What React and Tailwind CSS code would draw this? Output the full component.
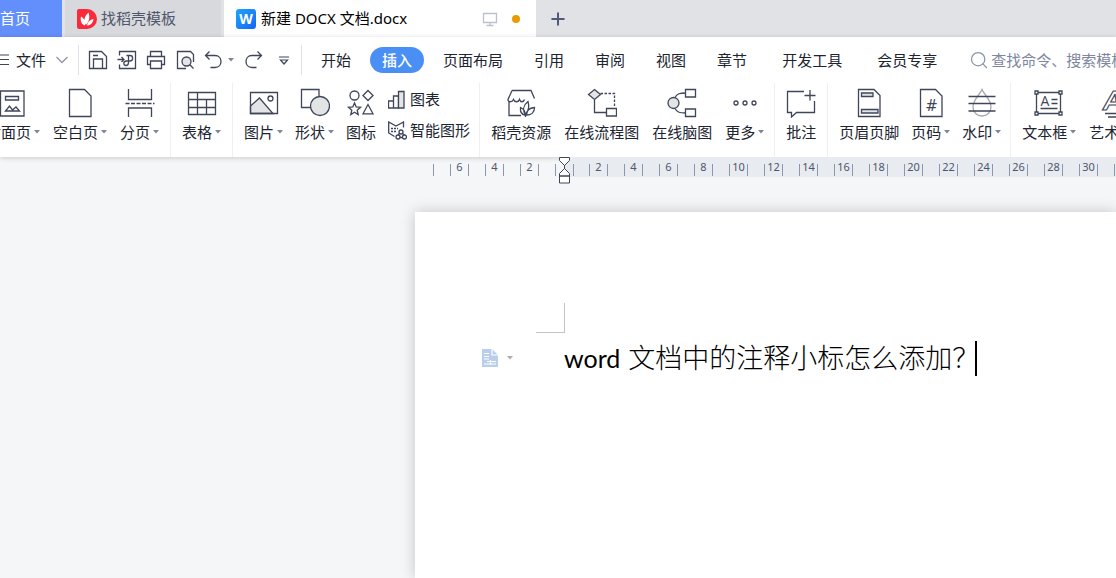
import { Plus, Search } from "lucide-react";

const ink = "#3f4659";

const Icon = ({ size = 30, children }) => (
  <svg
    width={size}
    height={size}
    viewBox={`0 0 ${size} ${size}`}
    fill="none"
    stroke={ink}
    strokeWidth="1.3"
    className="shrink-0"
    aria-hidden="true"
  >
    {children}
  </svg>
);

const Caret = () => (
  <svg width="6" height="4" viewBox="0 0 6 4" fill="#7c869c" className="shrink-0" aria-hidden="true">
    <path d="M0 0h6L3 3.5z" />
  </svg>
);

const icons = {
  cover: (
    <Icon>
      <path d="M2.5 3h23.5v25H2.5zM7.5 8.500h13v3.500h-13z" />
      <path d="M7.500 23l4-5 3 4 3.500-3 3.500 4z" />
    </Icon>
  ),
  blank: (
    <Icon>
      <path d="M4.500 1.500h15l6.500 6.500v20.500h-21.500z" />
    </Icon>
  ),
  pageBreak: (
    <Icon>
      <path d="M3.500 1v10.500h23V1M3.500 29v-9h23v9" />
      <path d="M.5 15.500h29" strokeDasharray="4 1.500" />
    </Icon>
  ),
  table: (
    <Icon>
      <path d="M1.500 4.500h27v22h-27zM1.500 11.500h27M1.500 19.500h27M10.500 4.500v22M19.500 11.500v15" />
    </Icon>
  ),
  picture: (
    <Icon>
      <path d="M1.500 18l9-8 13.500 15.500H1.500z" fill="#e2e4e6" />
      <path d="M1.500 4.500h27v21h-27z" />
      <circle cx="21.500" cy="10.500" r="2.500" />
    </Icon>
  ),
  shapes: (
    <Icon>
      <path d="M1.500 1.500h17.500v18H1.500z" />
      <circle cx="20" cy="18" r="9.500" fill="#e2e4e6" />
    </Icon>
  ),
  glyphs: (
    <Icon>
      <circle cx="8.500" cy="7.500" r="4.500" />
      <path d="M22 2.500l5 5-5 5-5-5z" />
      <path d="M8.500 15l1.700 4 4.300.300-3.300 2.900 1 4.300-3.700-2.300-3.700 2.300 1-4.300-3.300-2.900 4.300-.3z" />
      <path d="M22 16.500l5 9.300H17z" />
    </Icon>
  ),
  store: (
    <Icon>
      <path d="M6 2.500h19l3.500 8M6 2.500l-4 9c0 3 4 3 5.500 0 1 3 5 3 6 0 1 3 4 3 5 0M3 14v13.500h12" />
      <path d="M19.500 26.500c-3-4-2.500-9 2.500-13 1.500 5 1 9-2.500 13zM19 27c-3.500-.5-5-3-4.500-7.500 3.500 1.500 5 4 4.500 7.500zM20.500 27c0-4 2.500-7 8-7.500 0 4.500-3 7.500-8 7.500zM19.500 26v3" />
    </Icon>
  ),
  flow: (
    <Icon>
      <path d="M7.500 12v12.500H20" />
      <path d="M13.500 5.500h14v14" strokeDasharray="2.500 1.500" />
      <path d="M7.500 1.500l6 5-6 5-6-5z" fill="#e2e4e6" />
      <path d="M19.500 20.500h10v7.500h-10z" />
    </Icon>
  ),
  mind: (
    <Icon>
      <path d="M8 9.500c2-4 5-4.500 10.500-4.500M8 20.500c2 4 5 4.500 10.500 4.500" />
      <circle cx="6.500" cy="15" r="5.500" fill="#e2e4e6" />
      <path d="M18.500 1.500h10v7.500h-10zM18.500 21h10v7.500h-10z" />
    </Icon>
  ),
  more: (
    <Icon>
      <circle cx="6" cy="15" r="2" />
      <circle cx="15" cy="15" r="2" />
      <circle cx="24" cy="15" r="2" />
    </Icon>
  ),
  comment: (
    <Icon>
      <path d="M18 3.500H1.500v21h4v4.500l5-4.500h18V13M24 2v10.500M18.500 7.500h11" />
    </Icon>
  ),
  headerFooter: (
    <Icon>
      <path d="M4.500 1.500h15.500l6 6v21h-21.500z" />
      <path d="M7.500 5h11.500v3.500H7.500zM7.500 21.500h16.500v3.500h-16.500z" fill="#e2e4e6" />
    </Icon>
  ),
  pageNumber: (
    <Icon>
      <path d="M4.500 1.500h15l6.500 6.500v20.500h-21.500z" />
      <text x="15.500" y="23" textAnchor="middle" fontSize="15" fill={ink} stroke="none" className="font-['DejaVu_Sans']">
        #
      </text>
    </Icon>
  ),
  watermark: (
    <Icon>
      <path d="M15 1.500c-2 5-9 10-9 17.500 0 5.500 4 9 9 9s9-3.500 9-9c0-7.500-7-12.500-9-17.500z" stroke="#a6a9b2" />
      <path d="M1.500 8.500h27M1.500 15.500h27M1.500 23h27" />
    </Icon>
  ),
  textBox: (
    <Icon>
      <path d="M2.500 4.500h24v21h-24zM17.500 11.500h6M17.500 15.500h6M6.500 20.500h17" />
      <path d="M1 3h3v3H1zM25 3h3v3h-3zM1 24h3v3H1zM25 24h3v3h-3z" fill="#fff" />
      <text x="11" y="18" textAnchor="middle" fontSize="14" fill={ink} stroke="none" className="font-['Open_Sans']">
        A
      </text>
    </Icon>
  ),
  wordArt: (
    <Icon>
      <text x="2" y="22" fontSize="28" fontStyle="italic" fontWeight="700" fill="#fff" strokeWidth="1.2" className="font-['Liberation_Sans']">
        A
      </text>
      <path d="M4 25.500h22M7 29h16" />
    </Icon>
  ),
};

const quickIcons = [
  {
    label: "保存",
    icon: (
      <Icon size={20}>
        <path d="M1.500 1.500h12l5 5v12h-17zM5.500 18.500v-9.500h9v9.500M5 5.500h5" />
      </Icon>
    ),
  },
  {
    label: "输出为PDF",
    icon: (
      <Icon size={20}>
        <path d="M2.500 5.500v-4h16v17h-16v-4M.5 9.500h6.500M4.500 7l2.500 2.500L4.500 12" />
        <path d="M9.500 5.500h3.500c3.500 0 3.500 5.500 0 5.500H9.500c-3.500 0-3.500 4.500-.5 4.500 2 0 2.500-1.500 2.500-3V5.500" />
      </Icon>
    ),
  },
  {
    label: "打印",
    icon: (
      <Icon size={20}>
        <path d="M4.500 6V1.500h11V6M4.500 14.500h-3V6.500h17v8h-3M4.500 11h11v7.500h-11z" />
      </Icon>
    ),
  },
  {
    label: "打印预览",
    icon: (
      <Icon size={20}>
        <path d="M6 18.500H2.500v-17h13l3 3V12M3 18.500h8" />
        <circle cx="11.500" cy="11.500" r="4.500" fill="#e2e6e8" />
        <path d="M14.500 14.500l4 4" />
      </Icon>
    ),
  },
];

const groups = [
  {
    style: "gap-[13px] pr-[11px]",
    items: [
      { label: "封面页", icon: "cover", menu: true },
      { label: "空白页", icon: "blank", menu: true },
      { label: "分页", icon: "pageBreak", menu: true },
    ],
  },
  { style: "px-[11px]", items: [{ label: "表格", icon: "table", menu: true }] },
  {
    style: "gap-3 pl-[11px] pr-[9px]",
    items: [
      { label: "图片", icon: "picture", menu: true },
      { label: "形状", icon: "shapes", menu: true },
      { label: "图标", icon: "glyphs" },
    ],
    stacked: true,
  },
  {
    style: "gap-[13px] pl-[11px] pr-[10px]",
    items: [
      { label: "稻壳资源", icon: "store" },
      { label: "在线流程图", icon: "flow" },
      { label: "在线脑图", icon: "mind" },
      { label: "更多", icon: "more", menu: true },
    ],
  },
  { style: "px-[11px]", items: [{ label: "批注", icon: "comment" }] },
  {
    style: "gap-3 pl-[11px] pr-[9px]",
    items: [
      { label: "页眉页脚", icon: "headerFooter" },
      { label: "页码", icon: "pageNumber", menu: true },
      { label: "水印", icon: "watermark", menu: true },
    ],
  },
  {
    style: "gap-[13px] px-[11px]",
    items: [
      { label: "文本框", icon: "textBox", menu: true },
      { label: "艺术字", icon: "wordArt", menu: true },
    ],
  },
];

const menus = ["开始", "插入", "页面布局", "引用", "审阅", "视图", "章节"];
const extraMenus = ["开发工具", "会员专享"];
const leftMarks = [6, 4, 2];
const rightMarks = [2, 4, 6, 8, 10, 12, 14, 16, 18, 20, 22, 24, 26, 28, 30, 32];

const TabBar = () => (
  <header className="flex h-[37px] bg-[#e1e2e6]">
    <button className="flex w-[62px] shrink-0 items-center bg-[#628ffb] text-white">首页</button>
    <button className="ml-[3px] flex w-[156px] shrink-0 items-center gap-1 bg-[#d8d9dc] pl-3 text-[#4f566b]">
      <svg width="20" height="20" viewBox="0 0 20 20" aria-hidden="true">
        <path d="M2 0h8a10 10 0 0 1 0 20H2a2 2 0 0 1-2-2V2a2 2 0 0 1 2-2z" fill="#fb2a3b" />
        <path
          d="M9 16C6 12 7.500 7 11.500 3.500 13 8 12.500 12 9 16zM8 16.500C4.500 15.500 3 12 4 7.500 7 9 8.500 12.500 8 16.500zM10 16.500c1-4 3-6 6.500-6.500-.5 4-3 6.500-6.500 6.500z"
          fill="#fff"
        />
      </svg>
      找稻壳模板
    </button>
    <div className="ml-[3px] flex w-[312px] shrink-0 items-center bg-white pl-3 pr-4">
      <button className="flex flex-1 items-center gap-[5px] text-black font-['Noto_Sans','Noto_Sans_CJK_SC',sans-serif]">
        <svg width="20" height="20" viewBox="0 0 20 20" aria-hidden="true">
          <defs>
            <linearGradient id="logo" x1="0" y1="0" x2="1" y2="1">
              <stop offset="0" stopColor="#20a5fb" />
              <stop offset="1" stopColor="#1466f6" />
            </linearGradient>
          </defs>
          <rect width="20" height="20" rx="3" fill="url(#logo)" />
          <text x="10" y="15" textAnchor="middle" fontSize="14" fontWeight="700" fill="#fff" className="font-['Open_Sans']">
            W
          </text>
        </svg>
        新建 DOCX 文档.docx
      </button>
      <svg width="16" height="16" viewBox="0 0 16 16" fill="none" stroke="#bcc1d2" strokeWidth="1.3" aria-hidden="true">
        <path d="M1.500 2.500h13v9h-13zM8 11.500v3M4.500 14.500h7" />
      </svg>
      <span className="ml-[14px] size-2 rounded-full bg-[#e89a00]" />
    </div>
    <button className="flex w-[43px] shrink-0 items-center justify-center" aria-label="新建标签">
      <Plus size={20} strokeWidth={2.4} color="#4f5a78" />
    </button>
  </header>
);

const MenuBar = () => (
  <nav className="flex h-[46px] items-center whitespace-nowrap">
    <button className="flex items-center" aria-label="文件">
      <svg width="9" height="12" viewBox="0 0 9 12" stroke={ink} strokeWidth="1.2" aria-hidden="true">
        <path d="M0 1h9M0 5.500h9M0 10.500h9" />
      </svg>
      <span className="ml-[7px]">文件</span>
      <svg width="12" height="8" viewBox="0 0 12 8" fill="none" stroke="#8f95a3" strokeWidth="1.3" className="ml-[10px]" aria-hidden="true">
        <path d="M.5 1L6 6.500 11.500 1" />
      </svg>
    </button>
    <div className="ml-[10px] flex h-[30px] items-center border-x border-[#dfe1e6] pl-[9px] pr-3">
      <div className="flex gap-[9px]">
        {quickIcons.map((q) => (
          <button key={q.label} aria-label={q.label}>
            {q.icon}
          </button>
        ))}
      </div>
      <button className="ml-[9px] flex items-center gap-[4px]" aria-label="撤销">
        <Icon size={20}>
          <path d="M5.500 1.500L1.500 5.500l4 4M1.500 5.500H11c8 0 8 12 0 12H6.500" />
        </Icon>
        <Caret />
      </button>
      <button className="ml-[9px]" aria-label="恢复">
        <Icon size={20}>
          <path d="M14.500 1.500l4 4-4 4M18.500 5.500H9c-8 0-8 12 0 12h4.500" />
        </Icon>
      </button>
      <button className="ml-4" aria-label="自定义快速访问工具栏">
        <svg width="10" height="9" viewBox="0 0 10 9" fill="none" stroke={ink} strokeWidth="1.2" aria-hidden="true">
          <path d="M0 1h10M1.500 4h7L5 8z" />
        </svg>
      </button>
    </div>
    <div className="ml-[7px] flex gap-[7px]">
      {menus.map((m) => (
        <button
          key={m}
          className={m === "插入" ? "h-[26px] rounded-full bg-[#4a90f4] px-3 font-medium text-white" : "h-[26px] px-3"}
        >
          {m}
        </button>
      ))}
    </div>
    <div className="ml-[11px] flex gap-[11px]">
      {extraMenus.map((m) => (
        <button key={m} className="px-3">
          {m}
        </button>
      ))}
    </div>
    <label className="ml-5 flex min-w-0 flex-1 items-center gap-[2px]">
      <Search size={20} strokeWidth={1.5} color="#8b93ac" className="shrink-0" />
      <input
        aria-label="查找命令、搜索模板"
        placeholder="查找命令、搜索模板"
        className="w-[140px] shrink-0 bg-transparent outline-none placeholder:text-[#7d869e]"
      />
    </label>
  </nav>
);

const RibbonButton = ({ item }) => (
  <button className="flex shrink-0 flex-col items-center">
    {icons[item.icon]}
    <span className="mt-[3px] flex items-center gap-[3px] leading-[22px]">
      {item.label}
      {item.menu && <Caret />}
    </span>
  </button>
);

const Ribbon = () => (
  <div className="-ml-[14px] flex h-[74px] whitespace-nowrap">
    {groups.map((group) => (
      <div key={group.items[0].label} className={`flex shrink-0 items-start border-r border-[#eeeff2] pt-[5px] ${group.style}`}>
        {group.items.map((item) => (
          <RibbonButton key={item.label} item={item} />
        ))}
        {group.stacked && (
          <div className="flex flex-col gap-[9px]">
            <button className="flex items-center gap-[3px] leading-[22px]">
              <Icon size={19}>
                <path d="M.5 11h5v7h-5zM5.500 6h5v12h-5z" />
                <path d="M10.500 1.500h5.500V18h-5.500z" fill="#e2e4e6" />
              </Icon>
              图表
            </button>
            <button className="flex items-center gap-[3px] leading-[22px]">
              <Icon size={19}>
                <path d="M6.500 15.500L.7 12V1L8 5l7.500-4v5.500" />
                <path d="M3 7.500h7M3 10.500h5" strokeDasharray="2 1" />
                <circle cx="13" cy="11" r="2" />
                <circle cx="10" cy="16" r="2" />
                <circle cx="16.500" cy="16" r="2" />
                <path d="M11.500 12.500L10 14M14.500 12.500l2 1.500M12 16.500h2.500" />
              </Icon>
              智能图形
            </button>
          </div>
        )}
      </div>
    ))}
  </div>
);

const Mark = ({ value }) => (
  <div className="flex w-[35px] shrink-0 justify-center">
    <span className="flex h-3 w-[19px] items-center justify-center border-x border-[#8b97ad]">
      <span className="pb-[6px]">{value}</span>
    </span>
  </div>
);

const Ruler = () => (
  <div className="flex h-5 text-[11px] leading-3 text-[#4d566b] font-['Noto_Sans',sans-serif]">
    <div className="flex w-[564px] shrink-0 justify-end pt-[7px]">
      <span className="h-3 w-[9px] border-l border-[#8b97ad]" />
      {leftMarks.map((n) => (
        <Mark key={n} value={n} />
      ))}
      <span className="ml-2 h-3 w-[9px] border-l border-[#8b97ad]" />
    </div>
    <div className="relative flex min-w-0 flex-1 bg-[#e8ebf0]">
      <svg width="12" height="27" viewBox="0 0 12 27" fill="#fff" stroke={ink} className="absolute -left-[5px] top-0" aria-hidden="true">
        <path d="M.5.5h10v3l-5 5-5-5zM5.500 8v4M5.500 11.500l5 5v2.500h-10v-2.500zM.5 19h10v7h-10z" />
      </svg>
      <div className="flex w-full overflow-hidden pt-[7px]">
        <span className="ml-[9px] h-3 w-2 shrink-0 border-l border-[#8b97ad]" />
        {rightMarks.map((n) => (
          <Mark key={n} value={n} />
        ))}
      </div>
    </div>
  </div>
);

const Page = () => (
  <section className="ml-[415px] mt-[35px] flex-1 bg-white pt-[91px] shadow-[0_0_14px_rgba(0,0,0,0.2)]">
    <div className="ml-[121px] h-[30px] w-[29px] border-b border-r border-[#c4c4c4]" />
    <div className="mt-[7px] flex items-center pl-[67px]">
      <button className="flex items-center gap-[9px]" aria-label="段落布局">
        <svg width="16" height="18" viewBox="0 0 16 18" aria-hidden="true">
          <path d="M0 0h10l6 6v12H0z" fill="#b9cdec" />
          <path d="M10 0v6h6M2 4.500h5M2 7.500h5M2 10h5M5 12.500h9M2 15h12M8.500 11v5" stroke="#fff" strokeWidth="1.2" fill="none" />
        </svg>
        <svg width="6" height="4" viewBox="0 0 6 4" fill="#adadad" aria-hidden="true">
          <path d="M0 0h6L3 3.500z" />
        </svg>
      </button>
      <p className="ml-[51px] whitespace-nowrap text-[27px] font-light leading-9 text-black">
        <span className="mr-2 text-[25px] font-normal font-['Lato',sans-serif]">word</span>
        文档中的注释小标怎么添加？
      </p>
      <span className="-ml-1 h-[35px] w-[2px] bg-black" />
    </div>
  </section>
);

const App = () => {
  return (
    <div className="flex min-h-screen flex-col overflow-hidden bg-[#f5f6f8] text-[15px] text-[#20242f] font-['Open_Sans','Noto_Sans_CJK_SC',sans-serif]">
      <TabBar />
      <div className="bg-white shadow-[0_1px_5px_rgba(0,0,0,0.18)]">
        <MenuBar />
        <Ribbon />
      </div>
      <Ruler />
      <Page />
    </div>
  );
};

export default App;
